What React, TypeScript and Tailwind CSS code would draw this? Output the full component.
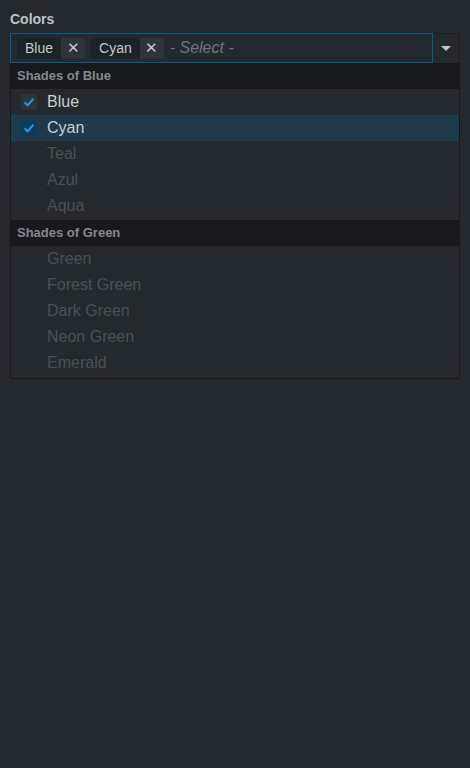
import React from 'react';

const blues = ['Blue', 'Cyan', 'Teal', 'Azul', 'Aqua'];
const greens = ['Green', 'Forest Green', 'Dark Green', 'Neon Green', 'Emerald'];
const selected = ['Blue', 'Cyan'];

const Check = () => (
  <svg viewBox="0 0 16 16" className="w-4 h-4">
    <path d="M3.5 8.2 L6.6 11.2 L12.5 4.8" fill="none" stroke="#1d9be6" strokeWidth="2" />
  </svg>
);

const Option = ({ label, active }: { label: string; active?: boolean }) => {
  const isSel = selected.includes(label);
  return (
    <div className={`flex items-center h-[26px] pl-[10px] ${active ? 'bg-[#1f3a4a]' : ''}`}>
      <div className="w-4 h-4">
        {isSel && (
          <div className={`w-4 h-4 rounded-[2px] ${active ? 'bg-[#0d3b5c]' : 'bg-[#2d3539]'}`}>
            <Check />
          </div>
        )}
      </div>
      <span className={`ml-[10px] text-[16px] ${isSel ? 'text-[#c9ced1]' : 'text-[#4a5155]'}`}>{label}</span>
    </div>
  );
};

const Tag = ({ label }: { label: string }) => (
  <div className="flex h-[21px] rounded-[2px] overflow-hidden text-[14px]">
    <span className="bg-[#1c2226] text-[#c3c8cb] pl-2 pr-2 flex items-center">{label}</span>
    <span className="bg-[#2e3539] text-[#c3c8cb] w-6 flex items-center justify-center text-[15px]">✕</span>
  </div>
);

export default function App() {
  return (
    <div className="min-h-[768px] bg-[#23292d] px-[10px] pt-[10px] font-['Liberation_Sans',Arial,sans-serif]">
      <div className="text-[14px] font-bold text-[#bfc4c7] leading-[18px] mb-[5px]">Colors</div>
      <div className="flex h-[30px]">
        <div className="flex-1 border border-[#0b5b8d] flex items-center gap-[6px] pl-[6px]">
          <Tag label="Blue" />
          <Tag label="Cyan" />
          <span className="italic text-[16px] text-[#6f767a]">- Select -</span>
        </div>
        <div className="w-[27px] bg-[#23292d] rounded-tr-[3px] border-r border-t border-[#1a1f22] flex items-center justify-center">
          <svg viewBox="0 0 10 6" className="w-[10px] h-[6px]">
            <path d="M0 0 H10 L5 5 Z" fill="#c4c8cb" />
          </svg>
        </div>
      </div>
      <div className="border border-[#15191b] border-t-0 rounded-b-[2px] pb-[2px]">
        <div className="h-[26px] bg-[#161a1d] flex items-center pl-[6px] text-[13px] font-bold text-[#83898d]">Shades of Blue</div>
        {blues.map((b) => (
          <Option key={b} label={b} active={b === 'Cyan'} />
        ))}
        <div className="mt-px h-[26px] bg-[#161a1d] flex items-center pl-[6px] text-[13px] font-bold text-[#83898d]">Shades of Green</div>
        {greens.map((g) => (
          <Option key={g} label={g} />
        ))}
      </div>
    </div>
  );
}
